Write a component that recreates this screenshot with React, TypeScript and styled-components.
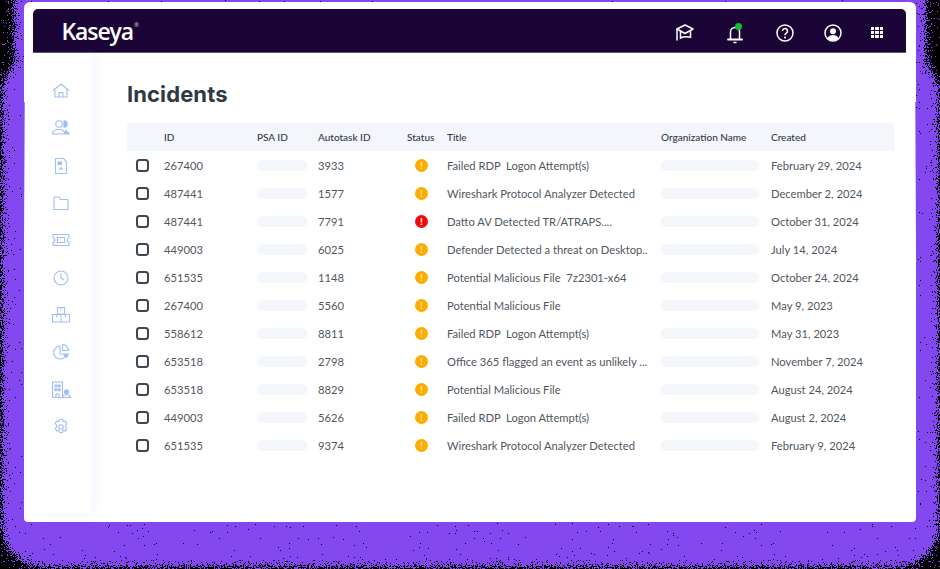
import React from 'react';
import styled, {createGlobalStyle} from "styled-components";

type Incident = {
    id: string
    autotask: string
    critical?: boolean
    title: string
    created: string
}

const incidents: Array<Incident> = [
    {id: "267400", autotask: "3933", title: "Failed RDP  Logon Attempt(s)", created: "February 29, 2024"},
    {id: "487441", autotask: "1577", title: "Wireshark Protocol Analyzer Detected", created: "December 2, 2024"},
    {id: "487441", autotask: "7791", critical: true, title: "Datto AV Detected TR/ATRAPS....", created: "October 31, 2024"},
    {id: "449003", autotask: "6025", title: "Defender Detected a threat on Desktop..", created: "July 14, 2024"},
    {id: "651535", autotask: "1148", title: "Potential Malicious File  7z2301-x64", created: "October 24, 2024"},
    {id: "267400", autotask: "5560", title: "Potential Malicious File", created: "May 9, 2023"},
    {id: "558612", autotask: "8811", title: "Failed RDP  Logon Attempt(s)", created: "May 31, 2023"},
    {id: "653518", autotask: "2798", title: "Office 365 flagged an event as unlikely ...", created: "November 7, 2024"},
    {id: "653518", autotask: "8829", title: "Potential Malicious File", created: "August 24, 2024"},
    {id: "449003", autotask: "5626", title: "Failed RDP  Logon Attempt(s)", created: "August 2, 2024"},
    {id: "651535", autotask: "9374", title: "Wireshark Protocol Analyzer Detected", created: "February 9, 2024"},
];

const sideIcons = [
    <>
        <path d="M2 9.500 10 3l8 6.500" />
        <path d="M4 8.500V16h12V8.500" />
        <path d="M8 16v-4.500h4V16" />
    </>,
    <>
        <circle cx="8" cy="6" r="3.300" />
        <path d="M13 2.800a3.200 3.200 0 0 1 0 6.400z" fill="currentColor" />
        <path d="M1.500 16c0-3 2.500-4.500 6.500-4.500s5.500 1.500 6 4.500z" />
        <path d="M14.500 12.500l4 3.500h-4z" fill="currentColor" />
    </>,
    <>
        <path d="M4.500 2.500h8l3 3v12h-11z" />
        <path d="M7 6h3.500v2.500H7z" fill="currentColor" />
        <path d="M8 14l2-2.500 2 2.500" />
    </>,
    <>
        <path d="M3 16.500V4h5l1.500 2.500H17v10z" />
    </>,
    <>
        <path d="M2 4.500h16v3.500a2 2 0 0 0 0 4v3.500H2V12a2 2 0 0 0 0-4z" />
        <path d="M6.500 7.500h7v5h-7z" />
    </>,
    <>
        <circle cx="10" cy="10" r="7" />
        <path d="M10 5.500V10l3 2" />
    </>,
    <>
        <path d="M6.500 2.500h7v6.500h-7z" />
        <path d="M1.500 9.500H10V17H1.500zM10 9.500h8.500V17H10z" />
        <path d="M10 2.500v3M5.700 9.500v3M14.300 9.500v3" />
    </>,
    <>
        <path d="M9 4a6.500 6.500 0 1 0 6.500 8H9z" />
        <path d="M11.500 2.500a6 6 0 0 1 6 6h-6z" />
        <path d="M13 13l4.500-1-2 3.500z" fill="currentColor" />
    </>,
    <>
        <path d="M1.500 2h10v15.500h-10z" />
        <path d="M4 5h1.800v1.800H4zM7.300 5h1.800v1.800H7.300zM4 8.800h1.800v1.800H4zM7.300 8.800h1.800v1.800H7.300z" fill="currentColor" />
        <path d="M5 17.500v-3.500h3v3.500" />
        <circle cx="15.500" cy="11.800" r="2" fill="currentColor" />
        <path d="M11.500 17.500c0-1.800 1.800-2.700 4-2.700s4 .9 4 2.700z" />
    </>,
    <>
        <path d="M8.500 2.500h3l.5 2.200 2-.8 1.800 2.500-1.300 1.600v2l1.300 1.600-1.800 2.500-2-.8-.5 2.200h-3l-.5-2.200-2 .8-1.800-2.500 1.300-1.600v-2L4.200 6.400 6 3.900l2 .8z" />
        <circle cx="10" cy="10" r="2.300" />
    </>,
];

const App = () => {
    return (
        <>
            <GlobalStyle />
            <Stage>
                <Glow width="940" height="569" viewBox="0 0 940 569">
                    <defs>
                        <filter id="dither" x="-40" y="-40" width="1020" height="650" filterUnits="userSpaceOnUse" colorInterpolationFilters="sRGB">
                            <feGaussianBlur in="SourceAlpha" stdDeviation="5.500" result="soft" />
                            <feTurbulence type="fractalNoise" baseFrequency="0.83" numOctaves="2" seed="4" result="noise" />
                            <feComposite in="soft" in2="noise" operator="arithmetic" k1="0" k2="1.500" k3="3" k4="-1.660" result="mix" />
                            <feComponentTransfer in="mix" result="hard">
                                <feFuncA type="discrete" tableValues="0 1" />
                            </feComponentTransfer>
                            <feFlood floodColor="#8347f0" />
                            <feComposite in2="hard" operator="in" />
                        </filter>
                    </defs>
                    <g filter="url(#dither)">
                        <rect x="3" y="55" width="935" height="511" rx="38" fill="#000" />
                        <rect x="15" y="-20" width="910" height="120" rx="10" fill="#000" />
                    </g>
                </Glow>
                <Card>
                    <Header>
                        <Logo>Kaseya<LogoMark>®</LogoMark></Logo>
                        <HeaderIcons>
                            <HeaderIcon $width={18}>
                                <svg width="18" height="17" viewBox="0 0 18 17" fill="none" stroke="#fff" strokeWidth="1.500">
                                    <path d="M1 5 9 1l8 4-8 4.500z" strokeLinejoin="round" />
                                    <path d="M4.500 7v7c3-1.500 7-1.600 10-.8V7" />
                                    <path d="M1 5v11" strokeLinecap="round" />
                                </svg>
                            </HeaderIcon>
                            <HeaderIcon $width={22}>
                                <svg width="20" height="22" viewBox="0 0 20 22" fill="none" stroke="#fff" strokeWidth="1.500">
                                    <path d="M5.500 17V10a4.500 4.500 0 0 1 9 0v7" />
                                    <path d="M3 17.500h14" strokeLinecap="round" strokeWidth="1.800" />
                                    <path d="M8.500 20.500h3" />
                                </svg>
                                <NotifyDot />
                            </HeaderIcon>
                            <HeaderIcon $width={18}>
                                <svg width="18" height="18" viewBox="0 0 18 18" fill="none" stroke="#fff" strokeWidth="1.500">
                                    <circle cx="9" cy="9" r="8" />
                                    <path d="M6.500 7a2.500 2.500 0 1 1 3.800 2.100C9.400 9.700 9 10 9 11.200" strokeWidth="1.600" />
                                    <circle cx="9" cy="13.500" r="1" fill="#fff" stroke="none" />
                                </svg>
                            </HeaderIcon>
                            <HeaderIcon $width={18}>
                                <svg width="18" height="18" viewBox="0 0 18 18" fill="none" stroke="#fff" strokeWidth="1.500">
                                    <circle cx="9" cy="9" r="8" />
                                    <circle cx="9" cy="7.300" r="3" fill="#fff" stroke="none" />
                                    <path d="M3.500 14.200c1-2.300 3-3.200 5.500-3.200s4.500.9 5.500 3.200C13 15.800 11 16.500 9 16.500s-4-.7-5.500-2.300z" fill="#fff" stroke="none" />
                                </svg>
                            </HeaderIcon>
                            <HeaderIcon $width={10}>
                                <AppGrid>
                                    {Array.from({length: 9}).map((_, i) => <AppCell key={i} />)}
                                </AppGrid>
                            </HeaderIcon>
                        </HeaderIcons>
                    </Header>
                    <Body>
                        <Sidebar>
                            {sideIcons.map((icon, i) => (
                                <SideIcon key={i} width="20" height="20" viewBox="0 0 20 20">{icon}</SideIcon>
                            ))}
                        </Sidebar>
                        <Main>
                            <Title>Incidents</Title>
                            <HeadRow>
                                <span />
                                <span>ID</span>
                                <span>PSA ID</span>
                                <span>Autotask ID</span>
                                <span>Status</span>
                                <span>Title</span>
                                <span>Organization Name</span>
                                <span>Created</span>
                            </HeadRow>
                            {incidents.map((item, index) => (
                                <Row key={index}>
                                    <Check />
                                    <span>{item.id}</span>
                                    <Pill />
                                    <span>{item.autotask}</span>
                                    <Status $critical={item.critical}>!</Status>
                                    <IncidentTitle>{item.title}</IncidentTitle>
                                    <Pill $wide />
                                    <span>{item.created}</span>
                                </Row>
                            ))}
                        </Main>
                    </Body>
                </Card>
            </Stage>
        </>
    );
};

export default App;

const GlobalStyle = createGlobalStyle`
  html, body {
    margin: 0;
    background: #000;
    overflow: hidden;
  }
  * {
    box-sizing: border-box;
  }
`

const Stage = styled.div`
  position: relative;
  width: 940px;
  height: 569px;
  padding: 2px 24px 0;
  background: #000;
  overflow: hidden;
  font-family: Lato, "Liberation Sans", sans-serif;
`

const Glow = styled.svg`
  position: absolute;
  left: 0;
  top: 0;
`

const Card = styled.div`
  position: relative;
  width: 892px;
  height: 520px;
  padding: 7px 10px 9px 9px;
  background: #fff;
  border-radius: 6px 6px 4px 4px;
  display: flex;
  flex-direction: column;

  &::before, &::after {
    content: "";
    position: absolute;
    top: 100px;
    width: 1px;
    height: 150px;
    background: linear-gradient(#a57cf4, #e6dcfb 70%, #fff);
  }
  &::before {
    left: 0;
  }
  &::after {
    right: 0;
  }
`

const Header = styled.header`
  flex: none;
  height: 44px;
  padding: 0 24px 0 28.500px;
  display: flex;
  align-items: center;
  justify-content: space-between;
  background: #1b0536;
  border-bottom: 1px solid #5f5673;
  border-radius: 5px 5px 0 0;
`

const Logo = styled.div`
  display: flex;
  align-items: flex-start;
  color: #fff;
  font-family: "Open Sans", sans-serif;
  font-size: 23px;
  font-weight: 600;
  line-height: 28px;
  letter-spacing: -1.100px;
`

const LogoMark = styled.span`
  margin-left: 1px;
  font-size: 6px;
  line-height: 16px;
  letter-spacing: 0;
  color: #cfcbd8;
`

const HeaderIcons = styled.div`
  display: flex;
  align-items: center;
  gap: 30px;
  padding-top: 4px;
`

const HeaderIcon = styled.div<{ $width: number }>`
  position: relative;
  width: ${props => props.$width}px;
  height: 22px;
  display: flex;
  align-items: center;
  justify-content: center;
`

const NotifyDot = styled.span`
  position: absolute;
  top: 1px;
  left: 11px;
  width: 7px;
  height: 7px;
  border-radius: 50%;
  background: #12c02c;
`

const AppGrid = styled.div`
  flex: none;
  display: grid;
  grid-template-columns: repeat(3, 3.300px);
  grid-auto-rows: 3.300px;
  gap: 1px;
`

const AppCell = styled.i`
  display: block;
  background: #fff;
`

const Body = styled.div`
  flex: 1;
  display: flex;
  min-height: 0;
`

const Sidebar = styled.nav`
  flex: none;
  width: 58px;
  padding: 28px 0 0 18px;
  display: flex;
  flex-direction: column;
  gap: 17.330px;
  background: #fff;
  box-shadow: 5px 0 12px rgba(70, 130, 220, 0.07);
`

const SideIcon = styled.svg`
  flex: none;
  color: #a0bdf5;
  fill: none;
  stroke: currentColor;
  stroke-width: 1.100;
  stroke-linejoin: round;
`

const Main = styled.main`
  flex: 1;
  padding: 26px 12px 0 36px;
  min-width: 0;
`

const Title = styled.h1`
  margin: 0 0 14px;
  font-family: Inter, "Liberation Sans", sans-serif;
  font-size: 22px;
  font-weight: 700;
  line-height: 30px;
  letter-spacing: 0.1px;
  color: #2d3a45;
`

const columns = "37px 93px 61px 89px 40px 214px 110px 1fr";

const HeadRow = styled.div`
  display: grid;
  grid-template-columns: ${columns};
  align-items: center;
  height: 28px;
  background: #f3f7fc;
  font-size: 10px;
  font-weight: 500;
  color: #2f3a44;
`

const Row = styled.div`
  display: grid;
  grid-template-columns: ${columns};
  align-items: center;
  height: 28px;
  font-size: 11.200px;
  color: #50575e;
`

const Check = styled.span`
  margin-left: 9px;
  width: 13px;
  height: 13px;
  border: 2px solid #3c4650;
  border-radius: 3.500px;
`

const Pill = styled.span<{ $wide?: boolean }>`
  width: ${props => props.$wide ? 98 : 50}px;
  height: 11px;
  border-radius: 6px;
  background: #f3f7fc;
`

const Status = styled.span<{ $critical?: boolean }>`
  margin-left: 8px;
  width: 13px;
  height: 13px;
  border-radius: 50%;
  background: ${props => props.$critical ? "#f60808" : "#ffab00"};
  color: ${props => props.$critical ? "#fff" : "#ffe9b8"};
  font-size: 10px;
  font-weight: 900;
  line-height: 13px;
  text-align: center;
`

const IncidentTitle = styled.span`
  white-space: pre;
`
